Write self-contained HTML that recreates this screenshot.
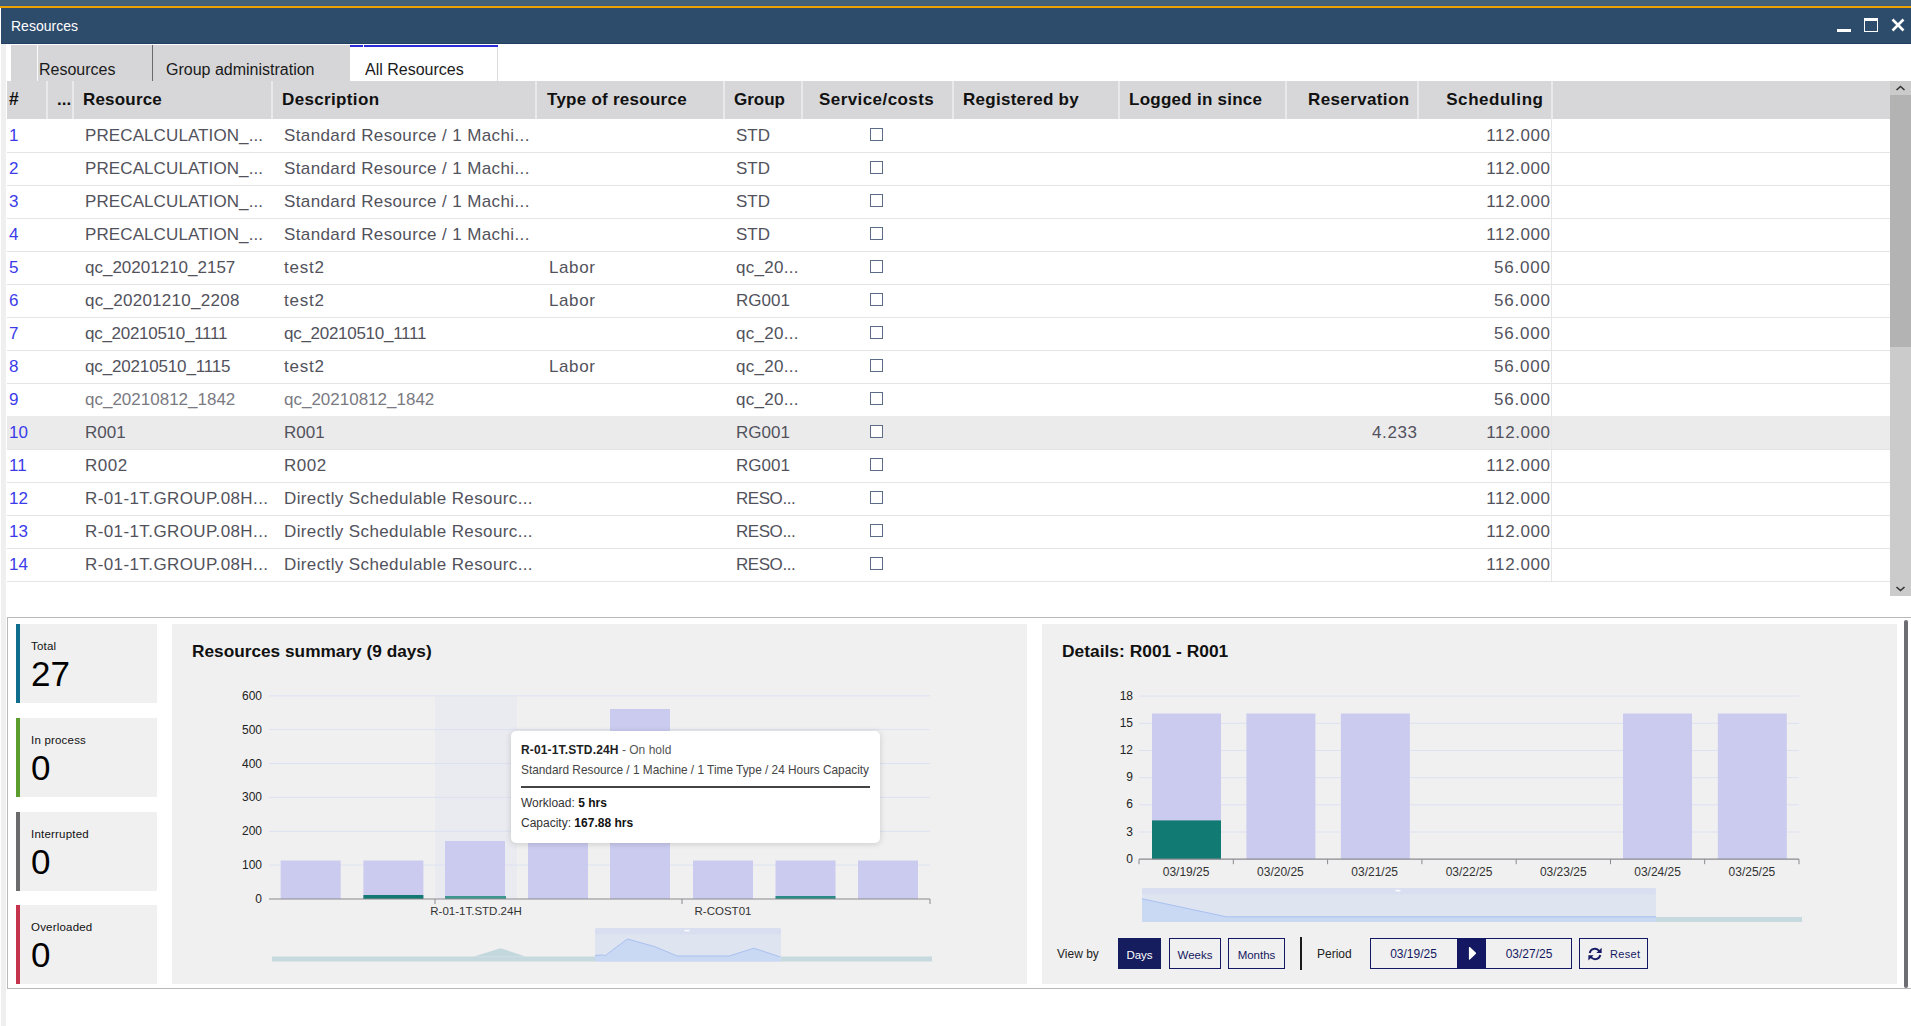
<!DOCTYPE html><html><head><meta charset='utf-8'><style>
*{box-sizing:border-box;margin:0;padding:0}
html,body{width:1911px;height:1026px;overflow:hidden;background:#fff;font-family:"Liberation Sans",sans-serif;position:relative}
.a{position:absolute}
.t{position:absolute;white-space:nowrap;line-height:1}
.hd{font-weight:bold;font-size:17px;color:#111}
.cell{font-size:17px;color:#52525c}
.num{color:#3b3bea}
.cb{position:absolute;width:13px;height:13px;border:1.3px solid #5c6b86;background:#fff}
.sep{position:absolute;top:81px;height:38px;width:2px;background:#e9e9eb}
.rowline{position:absolute;left:7px;width:1883px;height:1px;background:#e4e4e6}
.btn{position:absolute;border:1.5px solid #141862;color:#141862;font-size:11.5px;text-align:center;line-height:32px;background:transparent}
</style></head><body><div class="a" style="left:0;top:0;width:1911px;height:5px;background:#456178"></div>
<div class="a" style="left:0;top:5px;width:1911px;height:1px;background:#3a5a7e"></div>
<div class="a" style="left:0;top:6px;width:1911px;height:2px;background:#eea300"></div>
<div class="a" style="left:1px;top:8px;width:1910px;height:36px;background:#2d4c6c"></div>
<div class="a" style="left:1px;top:43px;width:1910px;height:1px;background:#223f60"></div>
<div class="t " style="left:11px;top:19px;font-size:14px;color:#fff">Resources</div>
<div class="a" style="left:1837px;top:29px;width:14px;height:3px;background:#fff"></div>
<div class="a" style="left:1864px;top:18px;width:14px;height:14px;border:1.5px solid #fff;border-top-width:3px"></div>
<svg class="a" style="left:1890px;top:17px" width="16" height="16" viewBox="0 0 16 16"><path d="M2.5 2.5 L13.5 13.5 M13.5 2.5 L2.5 13.5" stroke="#fff" stroke-width="2.6" stroke-linecap="butt"/></svg>
<div class="a" style="left:1px;top:44px;width:5px;height:982px;background:#efeff0"></div>
<div class="a" style="left:11px;top:45px;width:339px;height:36px;background:#d6d6d8"></div>
<div class="a" style="left:37px;top:45px;width:1px;height:36px;background:#fbfbfb"></div>
<div class="a" style="left:152px;top:45px;width:1px;height:36px;background:#6a6a6e"></div>
<div class="a" style="left:350px;top:45px;width:148px;height:36px;background:#fff;border-right:1px solid #dcdcde"></div>
<div class="a" style="left:350px;top:45px;width:13px;height:2px;background:#2c2cd4"></div>
<div class="a" style="left:364px;top:45px;width:134px;height:2px;background:#2c2cd4"></div>
<div class="t " style="left:39px;top:62px;font-size:16px;color:#1a1a1a">Resources</div>
<div class="t " style="left:166px;top:62px;font-size:16px;color:#1a1a1a">Group administration</div>
<div class="t " style="left:365px;top:62px;font-size:16px;color:#1a1a1a">All Resources</div>
<div class="a" style="left:7px;top:81px;width:1883px;height:38px;background:#d7d7d9"></div>
<div class="sep" style="left:46px"></div>
<div class="sep" style="left:72px"></div>
<div class="sep" style="left:271px"></div>
<div class="sep" style="left:535px"></div>
<div class="sep" style="left:723px"></div>
<div class="sep" style="left:801px"></div>
<div class="sep" style="left:952px"></div>
<div class="sep" style="left:1118px"></div>
<div class="sep" style="left:1285px"></div>
<div class="sep" style="left:1417px"></div>
<div class="sep" style="left:1550.5px"></div>
<div class="t hd" style="left:9px;top:91px;font-size:17.5px">#</div>
<div class="t hd" style="left:57px;top:91px;">...</div>
<div class="t hd" style="left:83px;top:91px;letter-spacing:0.19px">Resource</div>
<div class="t hd" style="left:282px;top:91px;letter-spacing:0.35px">Description</div>
<div class="t hd" style="left:547px;top:91px;letter-spacing:0.26px">Type of resource</div>
<div class="t hd" style="left:734px;top:91px;">Group</div>
<div class="t hd" style="left:819px;top:91px;letter-spacing:0.43px">Service/costs</div>
<div class="t hd" style="left:963px;top:91px;letter-spacing:0.27px">Registered by</div>
<div class="t hd" style="left:1129px;top:91px;letter-spacing:0.26px">Logged in since</div>
<div class="t hd" style="right:501.64px;top:91px;letter-spacing:0.36px">Reservation</div>
<div class="t hd" style="right:367.42px;top:91px;letter-spacing:0.58px">Scheduling</div>
<div class="a" style="left:1890px;top:81px;width:21px;height:515px;background:#cbcbcb"></div>
<div class="a" style="left:1890px;top:95px;width:21px;height:252px;background:#b3b3b3"></div>
<svg class="a" style="left:1890px;top:81px" width="21" height="14"><path d="M6.5 9 L10.5 5.5 L14.5 9" fill="none" stroke="#333" stroke-width="1.6"/></svg>
<svg class="a" style="left:1890px;top:582px" width="21" height="14"><path d="M6.5 5 L10.5 8.5 L14.5 5" fill="none" stroke="#333" stroke-width="1.6"/></svg>
<div class="rowline" style="top:152px"></div>
<div class="t cell num" style="left:9px;top:126.5px;">1</div>
<div class="t cell" style="left:85px;top:126.5px;;letter-spacing:0.1px">PRECALCULATION_...</div>
<div class="t cell" style="left:284px;top:126.5px;;letter-spacing:0.38px">Standard Resource / 1 Machi...</div>
<div class="t cell" style="left:736px;top:126.5px;letter-spacing:0px">STD</div>
<div class="cb" style="left:870px;top:128px"></div>
<div class="t cell" style="right:360.42px;top:126.5px;letter-spacing:0.58px">112.000</div>
<div class="rowline" style="top:185px"></div>
<div class="t cell num" style="left:9px;top:159.5px;">2</div>
<div class="t cell" style="left:85px;top:159.5px;;letter-spacing:0.1px">PRECALCULATION_...</div>
<div class="t cell" style="left:284px;top:159.5px;;letter-spacing:0.38px">Standard Resource / 1 Machi...</div>
<div class="t cell" style="left:736px;top:159.5px;letter-spacing:0px">STD</div>
<div class="cb" style="left:870px;top:161px"></div>
<div class="t cell" style="right:360.42px;top:159.5px;letter-spacing:0.58px">112.000</div>
<div class="rowline" style="top:218px"></div>
<div class="t cell num" style="left:9px;top:192.5px;">3</div>
<div class="t cell" style="left:85px;top:192.5px;;letter-spacing:0.1px">PRECALCULATION_...</div>
<div class="t cell" style="left:284px;top:192.5px;;letter-spacing:0.38px">Standard Resource / 1 Machi...</div>
<div class="t cell" style="left:736px;top:192.5px;letter-spacing:0px">STD</div>
<div class="cb" style="left:870px;top:194px"></div>
<div class="t cell" style="right:360.42px;top:192.5px;letter-spacing:0.58px">112.000</div>
<div class="rowline" style="top:251px"></div>
<div class="t cell num" style="left:9px;top:225.5px;">4</div>
<div class="t cell" style="left:85px;top:225.5px;;letter-spacing:0.1px">PRECALCULATION_...</div>
<div class="t cell" style="left:284px;top:225.5px;;letter-spacing:0.38px">Standard Resource / 1 Machi...</div>
<div class="t cell" style="left:736px;top:225.5px;letter-spacing:0px">STD</div>
<div class="cb" style="left:870px;top:227px"></div>
<div class="t cell" style="right:360.42px;top:225.5px;letter-spacing:0.58px">112.000</div>
<div class="rowline" style="top:284px"></div>
<div class="t cell num" style="left:9px;top:258.5px;">5</div>
<div class="t cell" style="left:85px;top:258.5px;;letter-spacing:0px">qc_20201210_2157</div>
<div class="t cell" style="left:284px;top:258.5px;;letter-spacing:0.8px">test2</div>
<div class="t cell" style="left:549px;top:258.5px;letter-spacing:0.6px">Labor</div>
<div class="t cell" style="left:736px;top:258.5px;letter-spacing:0.3px">qc_20...</div>
<div class="cb" style="left:870px;top:260px"></div>
<div class="t cell" style="right:360.22px;top:258.5px;letter-spacing:0.78px">56.000</div>
<div class="rowline" style="top:317px"></div>
<div class="t cell num" style="left:9px;top:291.5px;">6</div>
<div class="t cell" style="left:85px;top:291.5px;;letter-spacing:0.27px">qc_20201210_2208</div>
<div class="t cell" style="left:284px;top:291.5px;;letter-spacing:0.8px">test2</div>
<div class="t cell" style="left:549px;top:291.5px;letter-spacing:0.6px">Labor</div>
<div class="t cell" style="left:736px;top:291.5px;letter-spacing:0px">RG001</div>
<div class="cb" style="left:870px;top:293px"></div>
<div class="t cell" style="right:360.22px;top:291.5px;letter-spacing:0.78px">56.000</div>
<div class="rowline" style="top:350px"></div>
<div class="t cell num" style="left:9px;top:324.5px;">7</div>
<div class="t cell" style="left:85px;top:324.5px;;letter-spacing:-0.28px">qc_20210510_1111</div>
<div class="t cell" style="left:284px;top:324.5px;;letter-spacing:-0.28px">qc_20210510_1111</div>
<div class="t cell" style="left:736px;top:324.5px;letter-spacing:0.3px">qc_20...</div>
<div class="cb" style="left:870px;top:326px"></div>
<div class="t cell" style="right:360.22px;top:324.5px;letter-spacing:0.78px">56.000</div>
<div class="rowline" style="top:383px"></div>
<div class="t cell num" style="left:9px;top:357.5px;">8</div>
<div class="t cell" style="left:85px;top:357.5px;;letter-spacing:-0.15px">qc_20210510_1115</div>
<div class="t cell" style="left:284px;top:357.5px;;letter-spacing:0.8px">test2</div>
<div class="t cell" style="left:549px;top:357.5px;letter-spacing:0.6px">Labor</div>
<div class="t cell" style="left:736px;top:357.5px;letter-spacing:0.3px">qc_20...</div>
<div class="cb" style="left:870px;top:359px"></div>
<div class="t cell" style="right:360.22px;top:357.5px;letter-spacing:0.78px">56.000</div>
<div class="rowline" style="top:416px"></div>
<div class="t cell num" style="left:9px;top:390.5px;">9</div>
<div class="t cell" style="left:85px;top:390.5px;color:#7a7a82;letter-spacing:0px">qc_20210812_1842</div>
<div class="t cell" style="left:284px;top:390.5px;color:#7a7a82;letter-spacing:0px">qc_20210812_1842</div>
<div class="t cell" style="left:736px;top:390.5px;letter-spacing:0.3px">qc_20...</div>
<div class="cb" style="left:870px;top:392px"></div>
<div class="t cell" style="right:360.22px;top:390.5px;letter-spacing:0.78px">56.000</div>
<div class="a" style="left:7px;top:416px;width:1883px;height:33px;background:#ebebec"></div>
<div class="rowline" style="top:449px"></div>
<div class="t cell num" style="left:9px;top:423.5px;">10</div>
<div class="t cell" style="left:85px;top:423.5px;;letter-spacing:0px">R001</div>
<div class="t cell" style="left:284px;top:423.5px;;letter-spacing:0px">R001</div>
<div class="t cell" style="left:736px;top:423.5px;letter-spacing:0px">RG001</div>
<div class="cb" style="left:870px;top:425px"></div>
<div class="t cell" style="right:493.4px;top:423.5px;letter-spacing:0.6px">4.233</div>
<div class="t cell" style="right:360.42px;top:423.5px;letter-spacing:0.58px">112.000</div>
<div class="rowline" style="top:482px"></div>
<div class="t cell num" style="left:9px;top:456.5px;">11</div>
<div class="t cell" style="left:85px;top:456.5px;;letter-spacing:0.5px">R002</div>
<div class="t cell" style="left:284px;top:456.5px;;letter-spacing:0.5px">R002</div>
<div class="t cell" style="left:736px;top:456.5px;letter-spacing:0px">RG001</div>
<div class="cb" style="left:870px;top:458px"></div>
<div class="t cell" style="right:360.42px;top:456.5px;letter-spacing:0.58px">112.000</div>
<div class="rowline" style="top:515px"></div>
<div class="t cell num" style="left:9px;top:489.5px;">12</div>
<div class="t cell" style="left:85px;top:489.5px;;letter-spacing:0.4px">R-01-1T.GROUP.08H...</div>
<div class="t cell" style="left:284px;top:489.5px;;letter-spacing:0.38px">Directly Schedulable Resourc...</div>
<div class="t cell" style="left:736px;top:489.5px;letter-spacing:-0.45px">RESO...</div>
<div class="cb" style="left:870px;top:491px"></div>
<div class="t cell" style="right:360.42px;top:489.5px;letter-spacing:0.58px">112.000</div>
<div class="rowline" style="top:548px"></div>
<div class="t cell num" style="left:9px;top:522.5px;">13</div>
<div class="t cell" style="left:85px;top:522.5px;;letter-spacing:0.4px">R-01-1T.GROUP.08H...</div>
<div class="t cell" style="left:284px;top:522.5px;;letter-spacing:0.38px">Directly Schedulable Resourc...</div>
<div class="t cell" style="left:736px;top:522.5px;letter-spacing:-0.45px">RESO...</div>
<div class="cb" style="left:870px;top:524px"></div>
<div class="t cell" style="right:360.42px;top:522.5px;letter-spacing:0.58px">112.000</div>
<div class="rowline" style="top:581px"></div>
<div class="t cell num" style="left:9px;top:555.5px;">14</div>
<div class="t cell" style="left:85px;top:555.5px;;letter-spacing:0.4px">R-01-1T.GROUP.08H...</div>
<div class="t cell" style="left:284px;top:555.5px;;letter-spacing:0.38px">Directly Schedulable Resourc...</div>
<div class="t cell" style="left:736px;top:555.5px;letter-spacing:-0.45px">RESO...</div>
<div class="cb" style="left:870px;top:557px"></div>
<div class="t cell" style="right:360.42px;top:555.5px;letter-spacing:0.58px">112.000</div>
<div class="a" style="left:1551px;top:119px;width:1px;height:462px;background:#e6e6e8"></div>
<div class="a" style="left:7px;top:617px;width:1904px;height:372px;border:1px solid #b9b9bb;border-right:none"></div>
<div class="a" style="left:16px;top:624px;width:141px;height:79px;background:#f0f0f0"></div>
<div class="a" style="left:16px;top:624px;width:4px;height:79px;background:#0f6d8d"></div>
<div class="t " style="left:31px;top:641px;font-size:11.5px;color:#111;letter-spacing:0.2px">Total</div>
<div class="t " style="left:31px;top:656px;font-size:35px;color:#000">27</div>
<div class="a" style="left:16px;top:718px;width:141px;height:79px;background:#f0f0f0"></div>
<div class="a" style="left:16px;top:718px;width:4px;height:79px;background:#5c9e2e"></div>
<div class="t " style="left:31px;top:735px;font-size:11.5px;color:#111;letter-spacing:0.2px">In process</div>
<div class="t " style="left:31px;top:750px;font-size:35px;color:#000">0</div>
<div class="a" style="left:16px;top:812px;width:141px;height:79px;background:#f0f0f0"></div>
<div class="a" style="left:16px;top:812px;width:4px;height:79px;background:#6b6b6e"></div>
<div class="t " style="left:31px;top:829px;font-size:11.5px;color:#111;letter-spacing:0.2px">Interrupted</div>
<div class="t " style="left:31px;top:844px;font-size:35px;color:#000">0</div>
<div class="a" style="left:16px;top:905px;width:141px;height:79px;background:#f0f0f0"></div>
<div class="a" style="left:16px;top:905px;width:4px;height:79px;background:#c5334d"></div>
<div class="t " style="left:31px;top:922px;font-size:11.5px;color:#111;letter-spacing:0.2px">Overloaded</div>
<div class="t " style="left:31px;top:937px;font-size:35px;color:#000">0</div>
<div class="a" style="left:172px;top:624px;width:855px;height:360px;background:#f0f0f0"></div>
<div class="a" style="left:1042px;top:624px;width:855px;height:360px;background:#f0f0f0"></div>
<div class="a" style="left:1904px;top:620px;width:4px;height:368px;background:#6d6d74;border-radius:2px"></div>
<div class="t " style="left:192px;top:643px;font-size:17.25px;font-weight:bold;color:#111">Resources summary (9 days)</div>
<div class="t " style="left:1062px;top:643px;font-size:17.4px;font-weight:bold;color:#111">Details: R001 - R001</div>
<svg class="a" style="left:0;top:0" width="1911" height="1026" viewBox="0 0 1911 1026"><rect x="435" y="695.8" width="82" height="203.2" fill="#eaebf0"/><text x="262" y="903.0" text-anchor="end" font-family="Liberation Sans" font-size="12" fill="#222">0</text><line x1="269" x2="930" y1="865.1" y2="865.1" stroke="#dde2f2" stroke-width="1"/><text x="262" y="869.1" text-anchor="end" font-family="Liberation Sans" font-size="12" fill="#222">100</text><line x1="269" x2="930" y1="831.3" y2="831.3" stroke="#dde2f2" stroke-width="1"/><text x="262" y="835.3" text-anchor="end" font-family="Liberation Sans" font-size="12" fill="#222">200</text><line x1="269" x2="930" y1="797.4" y2="797.4" stroke="#dde2f2" stroke-width="1"/><text x="262" y="801.4" text-anchor="end" font-family="Liberation Sans" font-size="12" fill="#222">300</text><line x1="269" x2="930" y1="763.5" y2="763.5" stroke="#dde2f2" stroke-width="1"/><text x="262" y="767.5" text-anchor="end" font-family="Liberation Sans" font-size="12" fill="#222">400</text><line x1="269" x2="930" y1="729.6" y2="729.6" stroke="#dde2f2" stroke-width="1"/><text x="262" y="733.6" text-anchor="end" font-family="Liberation Sans" font-size="12" fill="#222">500</text><line x1="269" x2="930" y1="695.8" y2="695.8" stroke="#dde2f2" stroke-width="1"/><text x="262" y="699.8" text-anchor="end" font-family="Liberation Sans" font-size="12" fill="#222">600</text><rect x="280.7" y="860.5" width="60" height="38.5" fill="#cbcbf0"/><rect x="363.4" y="860.5" width="60" height="38.5" fill="#cbcbf0"/><rect x="445" y="841" width="60" height="58.0" fill="#cbcbf0"/><rect x="528" y="780" width="60" height="119.0" fill="#cbcbf0"/><rect x="610" y="709" width="60" height="190.0" fill="#cbcbf0"/><rect x="693" y="860.5" width="60" height="38.5" fill="#cbcbf0"/><rect x="775.5" y="860.5" width="60" height="38.5" fill="#cbcbf0"/><rect x="858" y="860.5" width="60" height="38.5" fill="#cbcbf0"/><rect x="363.4" y="895.0" width="60" height="4" fill="#137a72"/><rect x="445" y="896.0" width="61" height="3" fill="#3f9690"/><rect x="775.5" y="896.0" width="60" height="3" fill="#2a8a84"/><line x1="269" x2="930" y1="899.0" y2="899.0" stroke="#8a8a90" stroke-width="1.2"/><line x1="435" x2="435" y1="899.0" y2="904.0" stroke="#8a8a90" stroke-width="1"/><line x1="682" x2="682" y1="899.0" y2="904.0" stroke="#8a8a90" stroke-width="1"/><line x1="930" x2="930" y1="899.0" y2="904.0" stroke="#8a8a90" stroke-width="1"/><text x="476" y="915" text-anchor="middle" font-family="Liberation Sans" font-size="11.5" fill="#333">R-01-1T.STD.24H</text><text x="723" y="915" text-anchor="middle" font-family="Liberation Sans" font-size="11.5" fill="#333">R-COST01</text><rect x="272" y="956.5" width="660" height="5" fill="#c5d9df"/><path d="M474 956.5 L500.6 948.2 L525.7 956.5 Z" fill="#c3d8dc"/><rect x="595" y="928" width="186" height="33.5" rx="1.5" fill="#dfe4f1"/><rect x="595" y="928" width="186" height="6.5" rx="1.5" fill="#d9dff0"/><path d="M595 955.5 L602 955 L605.3 955.5 L627.4 939 L654.7 946.6 L677.3 956 L729 956 L754 948.2 L780.5 957 L780.5 961.5 L595 961.5 Z" fill="#c9d8f3"/><path d="M595 955.5 L602 955 L605.3 955.5 L627.4 939 L654.7 946.6 L677.3 956 L729 956 L754 948.2 L780.5 957" fill="none" stroke="#a9c1f0" stroke-width="1"/><rect x="684.5" y="929.8" width="5" height="1.6" fill="#fff" fill-opacity="0.9"/><text x="1133" y="862.7" text-anchor="end" font-family="Liberation Sans" font-size="12" fill="#222">0</text><line x1="1139" x2="1799" y1="832.0" y2="832.0" stroke="#dde2f2" stroke-width="1"/><text x="1133" y="835.5" text-anchor="end" font-family="Liberation Sans" font-size="12" fill="#222">3</text><line x1="1139" x2="1799" y1="804.8" y2="804.8" stroke="#dde2f2" stroke-width="1"/><text x="1133" y="808.3" text-anchor="end" font-family="Liberation Sans" font-size="12" fill="#222">6</text><line x1="1139" x2="1799" y1="777.7" y2="777.7" stroke="#dde2f2" stroke-width="1"/><text x="1133" y="781.2" text-anchor="end" font-family="Liberation Sans" font-size="12" fill="#222">9</text><line x1="1139" x2="1799" y1="750.5" y2="750.5" stroke="#dde2f2" stroke-width="1"/><text x="1133" y="754.0" text-anchor="end" font-family="Liberation Sans" font-size="12" fill="#222">12</text><line x1="1139" x2="1799" y1="723.3" y2="723.3" stroke="#dde2f2" stroke-width="1"/><text x="1133" y="726.8" text-anchor="end" font-family="Liberation Sans" font-size="12" fill="#222">15</text><line x1="1139" x2="1799" y1="696.1" y2="696.1" stroke="#dde2f2" stroke-width="1"/><text x="1133" y="699.6" text-anchor="end" font-family="Liberation Sans" font-size="12" fill="#222">18</text><rect x="1152" y="713.5" width="69" height="145.7" fill="#cbcbf0"/><rect x="1246.4" y="713.5" width="69" height="145.7" fill="#cbcbf0"/><rect x="1340.9" y="713.5" width="69" height="145.7" fill="#cbcbf0"/><rect x="1623" y="713.5" width="69" height="145.7" fill="#cbcbf0"/><rect x="1717.8" y="713.5" width="69" height="145.7" fill="#cbcbf0"/><rect x="1152" y="820.4" width="69" height="38.8" fill="#117a73"/><line x1="1139" x2="1799" y1="859.2" y2="859.2" stroke="#8a8a90" stroke-width="1.2"/><line x1="1139.0" x2="1139.0" y1="859.2" y2="864.2" stroke="#8a8a90" stroke-width="1"/><line x1="1233.3" x2="1233.3" y1="859.2" y2="864.2" stroke="#8a8a90" stroke-width="1"/><line x1="1327.6" x2="1327.6" y1="859.2" y2="864.2" stroke="#8a8a90" stroke-width="1"/><line x1="1421.9" x2="1421.9" y1="859.2" y2="864.2" stroke="#8a8a90" stroke-width="1"/><line x1="1516.2" x2="1516.2" y1="859.2" y2="864.2" stroke="#8a8a90" stroke-width="1"/><line x1="1610.5" x2="1610.5" y1="859.2" y2="864.2" stroke="#8a8a90" stroke-width="1"/><line x1="1704.7" x2="1704.7" y1="859.2" y2="864.2" stroke="#8a8a90" stroke-width="1"/><line x1="1799.0" x2="1799.0" y1="859.2" y2="864.2" stroke="#8a8a90" stroke-width="1"/><text x="1186.1" y="876" text-anchor="middle" font-family="Liberation Sans" font-size="12" fill="#333">03/19/25</text><text x="1280.4" y="876" text-anchor="middle" font-family="Liberation Sans" font-size="12" fill="#333">03/20/25</text><text x="1374.7" y="876" text-anchor="middle" font-family="Liberation Sans" font-size="12" fill="#333">03/21/25</text><text x="1469.0" y="876" text-anchor="middle" font-family="Liberation Sans" font-size="12" fill="#333">03/22/25</text><text x="1563.3" y="876" text-anchor="middle" font-family="Liberation Sans" font-size="12" fill="#333">03/23/25</text><text x="1657.6" y="876" text-anchor="middle" font-family="Liberation Sans" font-size="12" fill="#333">03/24/25</text><text x="1751.9" y="876" text-anchor="middle" font-family="Liberation Sans" font-size="12" fill="#333">03/25/25</text><rect x="1142" y="917" width="660" height="5" fill="#c5d9df"/><rect x="1142" y="888" width="514" height="34" rx="1.5" fill="#dfe4f1"/><rect x="1142" y="888" width="514" height="6.5" rx="1.5" fill="#d9dff0"/><path d="M1142 898.8 L1226.5 916.8 L1656 916.8 L1656 922 L1142 922 Z" fill="#c9d8f3"/><path d="M1142 898.8 L1226.5 916.8 L1656 916.8" fill="none" stroke="#a9c1f0" stroke-width="1"/><rect x="1395.5" y="889.8" width="5" height="1.6" fill="#fff" fill-opacity="0.9"/></svg>
<div class="a" style="left:511px;top:731px;width:369px;height:112px;background:#fff;border-radius:5px;box-shadow:0 1px 6px rgba(0,0,0,0.16)"></div>
<div class="t " style="left:521px;top:744px;font-size:12px;color:#555"><b style="color:#222;letter-spacing:0.15px">R-01-1T.STD.24H</b> - On hold</div>
<div class="t " style="left:521px;top:765px;font-size:11.85px;color:#444">Standard Resource / 1 Machine / 1 Time Type / 24 Hours Capacity</div>
<div class="a" style="left:521px;top:786px;width:349px;height:2px;background:#444"></div>
<div class="t " style="left:521px;top:797px;font-size:12px;color:#333">Workload: <b style="color:#111">5 hrs</b></div>
<div class="t " style="left:521px;top:817px;font-size:12px;color:#333">Capacity: <b style="color:#111">167.88 hrs</b></div>
<div class="t " style="left:1057px;top:948px;font-size:12px;color:#222">View by</div>
<div class="btn" style="left:1118px;top:938px;width:43px;height:31px;background:#161d5e;color:#fff;border-color:#161d5e">Days</div>
<div class="btn" style="left:1169px;top:938px;width:52px;height:31px">Weeks</div>
<div class="btn" style="left:1228px;top:938px;width:57px;height:31px">Months</div>
<div class="a" style="left:1300px;top:937px;width:2px;height:33px;background:#1a1a1a"></div>
<div class="t " style="left:1317px;top:948px;font-size:12px;color:#222">Period</div>
<div class="a" style="left:1370px;top:938px;width:202px;height:31px;border:1.5px solid #141862"></div>
<div class="t" style="left:1370px;top:938px;width:87px;height:31px;line-height:33px;text-align:center;font-size:12px;color:#141862">03/19/25</div>
<div class="a" style="left:1457px;top:938px;width:29px;height:31px;background:#141862"></div>
<svg class="a" style="left:1457px;top:938px" width="29" height="31"><path d="M12.5 9.5 L18.5 15.2 L12.5 21 Z" fill="#fff" stroke="#fff" stroke-width="1.2" stroke-linejoin="round"/></svg>
<div class="t" style="left:1486px;top:938px;width:86px;height:31px;line-height:33px;text-align:center;font-size:12px;color:#141862">03/27/25</div>
<div class="btn" style="left:1579px;top:938px;width:69px;height:31px"></div>
<div class="t " style="left:1610px;top:948.5px;font-size:11px;color:#141862;letter-spacing:0.3px">Reset</div>
<svg class="a" style="left:1587px;top:946px" width="16" height="16" viewBox="0 0 16 16"><path d="M2.7 7 A5.3 5.3 0 0 1 12.3 5.2" fill="none" stroke="#141862" stroke-width="1.9"/><path d="M14.6 1.8 L14.6 7 L9.4 7 Z" fill="#141862"/><path d="M13.3 9 A5.3 5.3 0 0 1 3.7 10.8" fill="none" stroke="#141862" stroke-width="1.9"/><path d="M1.4 9.2 L6.6 9.2 L1.4 14.4 Z" fill="#141862"/></svg></body></html>
